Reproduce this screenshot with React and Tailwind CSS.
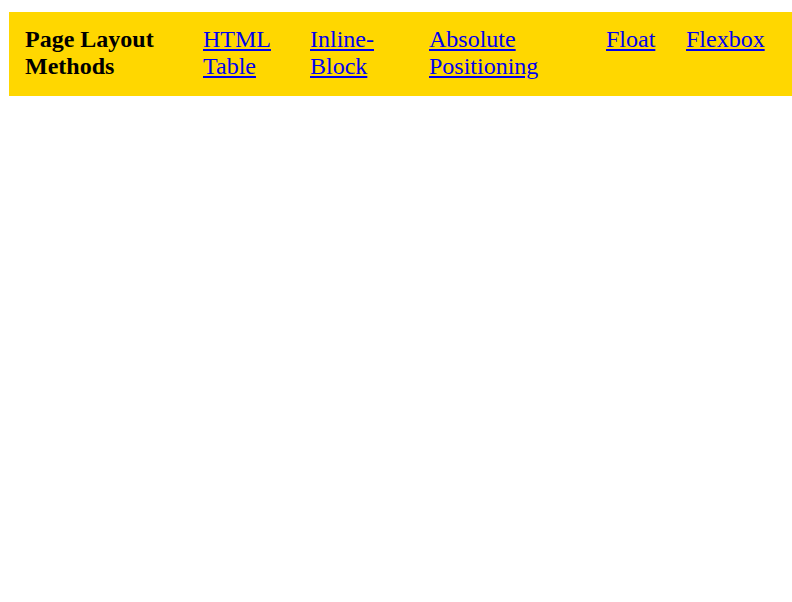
export default function App() {
  return (
    <div className="w-[792px] h-[602px] bg-white pt-[12px] pl-[9px] font-['Liberation_Serif',serif] text-[24px] leading-[27px]">
      <div className="flex bg-[#ffd700] pt-[14px] pb-[16px] pl-[16px]">
        <div className="w-[178px] shrink-0 font-bold text-black">
          Page Layout
          <br />
          Methods
        </div>
        <div className="w-[107px] shrink-0">
          <a href="#" className="text-[#0000ee] underline">HTML<br />Table</a>
        </div>
        <div className="w-[119px] shrink-0">
          <a href="#" className="text-[#0000ee] underline">Inline-<br />Block</a>
        </div>
        <div className="w-[177px] shrink-0">
          <a href="#" className="text-[#0000ee] underline">Absolute<br />Positioning</a>
        </div>
        <div className="w-[80px] shrink-0">
          <a href="#" className="text-[#0000ee] underline">Float</a>
        </div>
        <div className="w-[90px] shrink-0">
          <a href="#" className="text-[#0000ee] underline">Flexbox</a>
        </div>
      </div>
    </div>
  );
}
